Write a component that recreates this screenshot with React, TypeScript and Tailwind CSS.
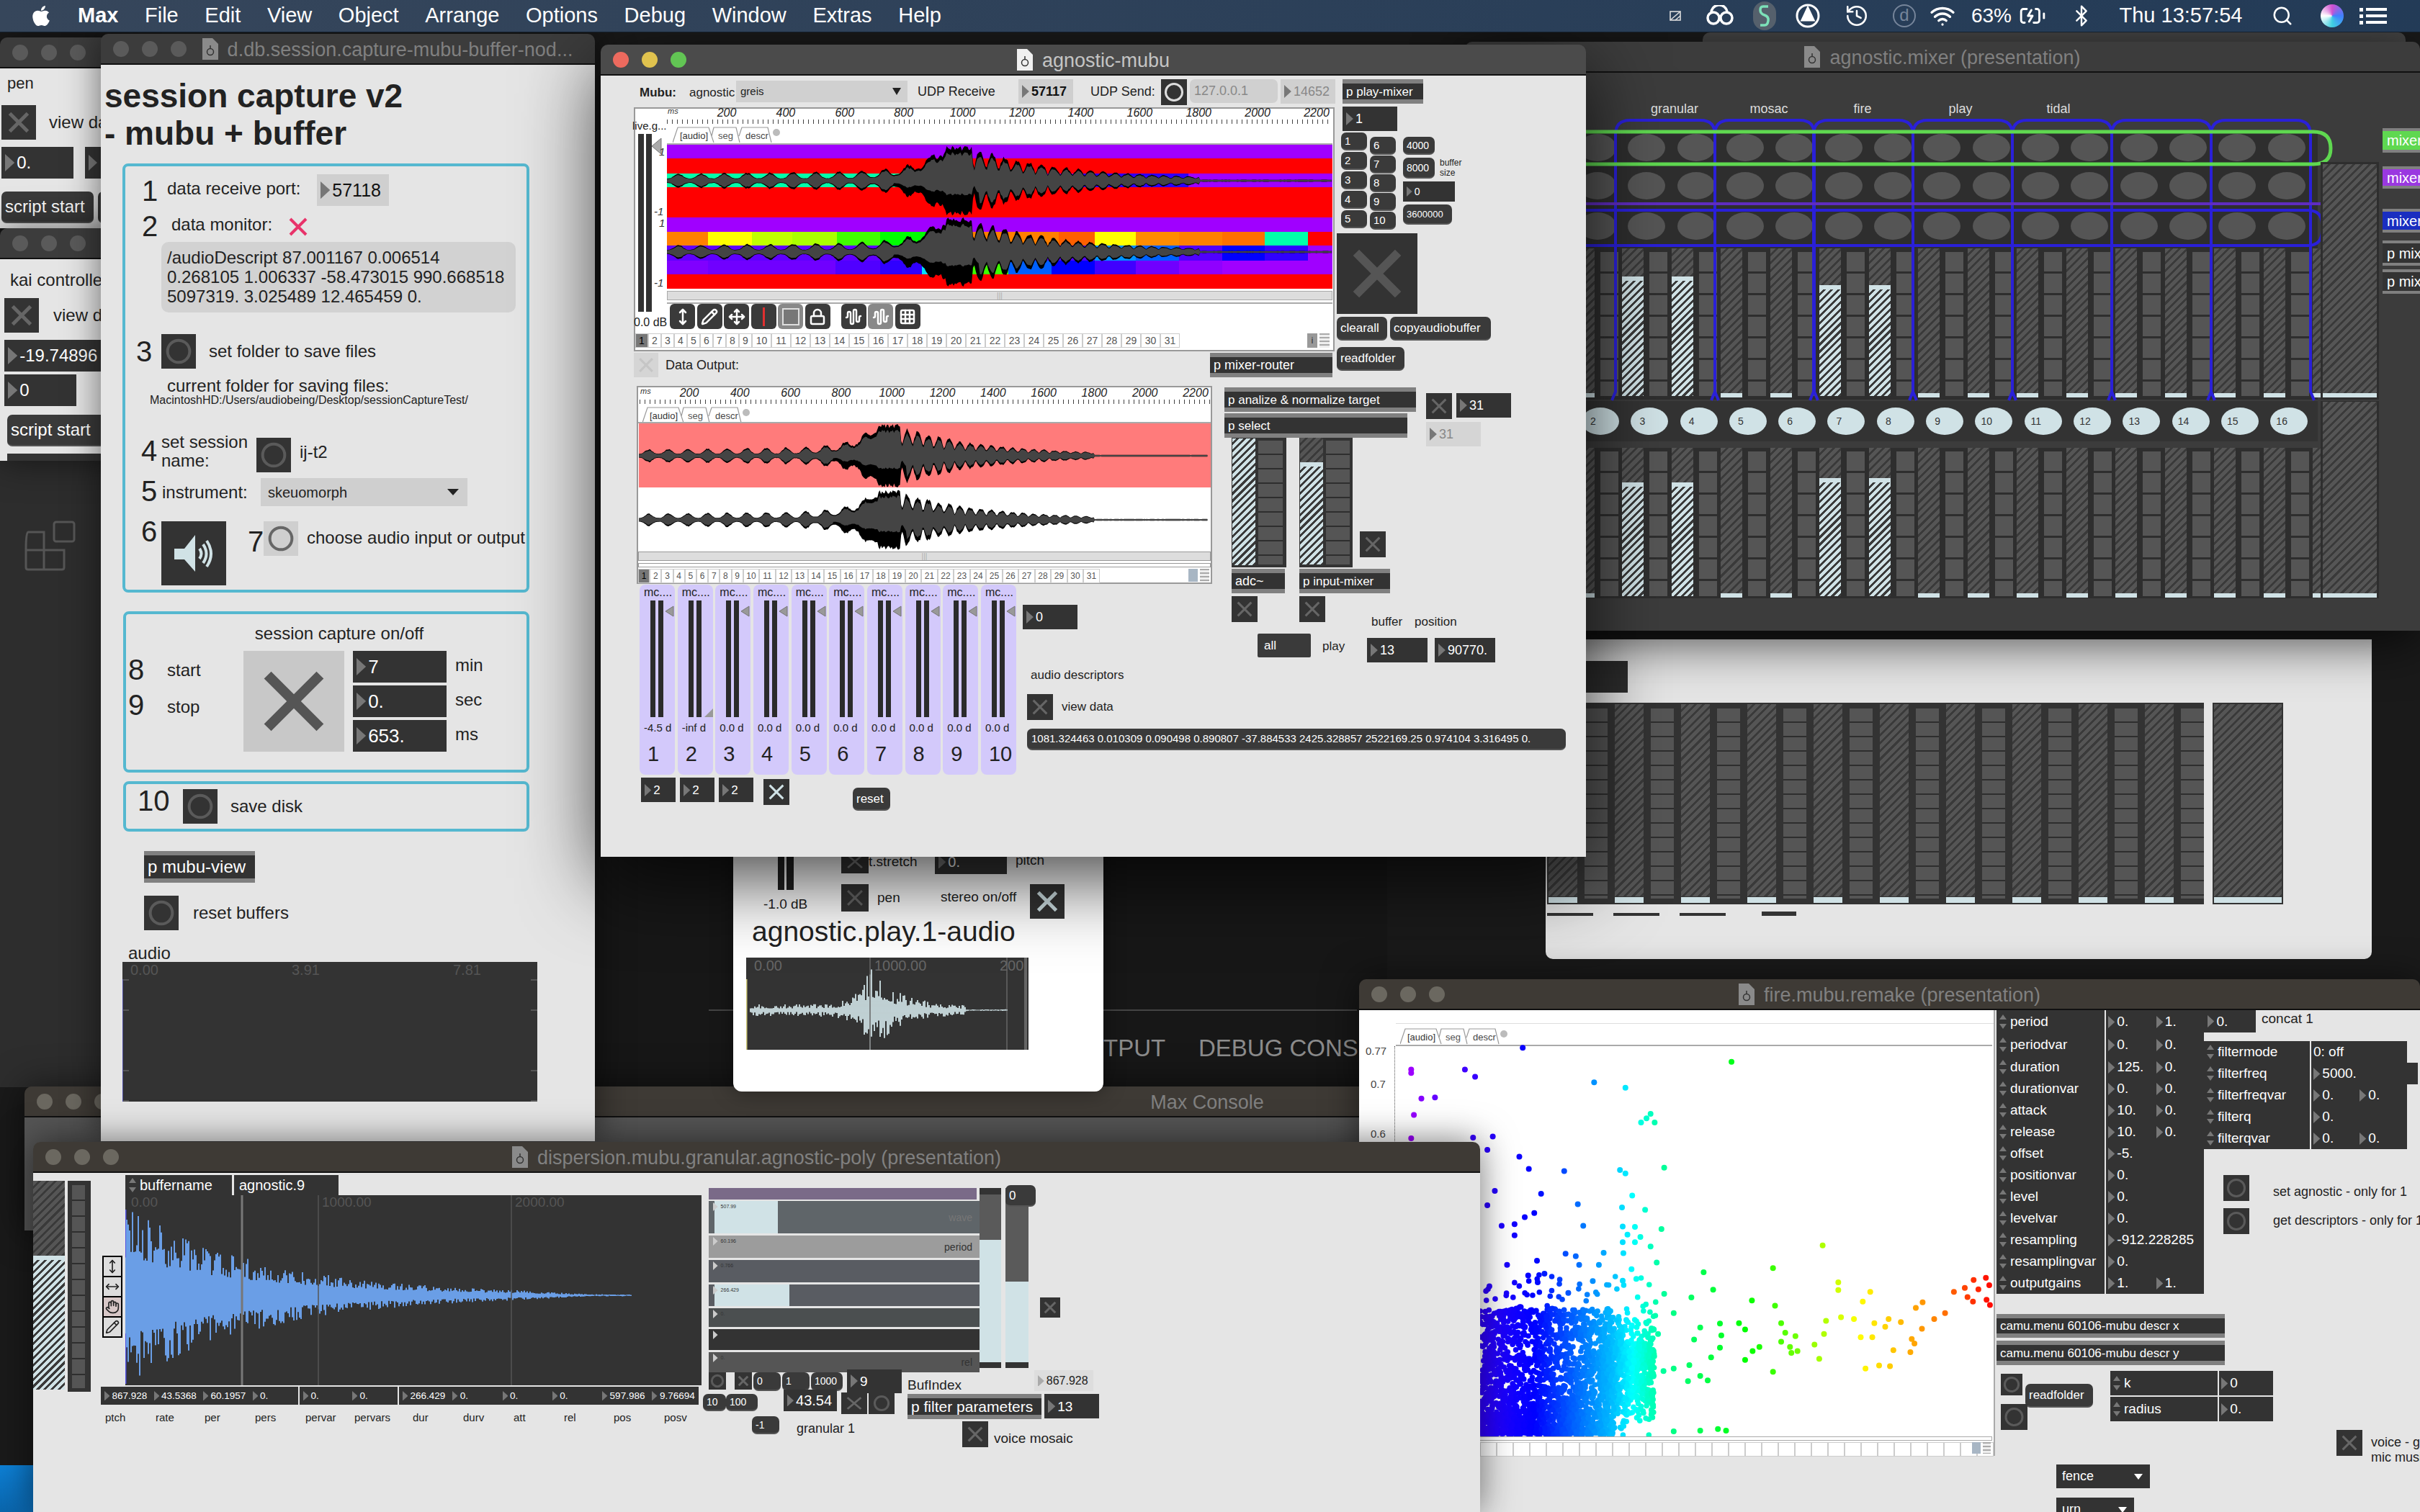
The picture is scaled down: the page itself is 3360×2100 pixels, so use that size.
import React from "react";
import { FaApple } from "react-icons/fa";
import {
  AudioWaveform, BatteryCharging, Bluetooth, Grid3x3, Hand, History, Lock, Move, MoveHorizontal,
  MoveVertical, Pencil, Search, Wifi,
} from "lucide-react";

// Max/MSP desktop: windows are a free canvas, and so is every patcher inside them.
// Coordinates are page pixels; Win shifts its children back so they stay readable.
// Objects that come in rows or stacks (faders, strips, param lists) sit in flex containers.

type BoxProps = { x?: number; y?: number; w?: number; h?: number; className?: string; children?: React.ReactNode };

const hatchLight = "bg-[repeating-linear-gradient(135deg,#d0e2e6_0,#d0e2e6_4px,#3a3a3a_4px,#3a3a3a_7px)]";
const hatchDark = "bg-[repeating-linear-gradient(135deg,#555555_0,#555555_5px,#3a3a3a_5px,#3a3a3a_8px)]";
const meterBig = "bg-[repeating-linear-gradient(to_bottom,#555555_0,#555555_27px,#2e2e2e_27px,#2e2e2e_30px)]";
const meterSmall = "bg-[repeating-linear-gradient(to_bottom,#555555_0,#555555_18px,#2e2e2e_18px,#2e2e2e_20px)]";
const listLines = "bg-[repeating-linear-gradient(to_bottom,#aaaaaa_0,#aaaaaa_2px,#eeeeee_2px,#eeeeee_5px)]";

const Box = ({ x, y, w, h, className = "", children }: BoxProps) => (
  <div className={`${x === undefined ? "relative shrink-0" : "absolute"} ${className}`} style={{ left: x, top: y, width: w, height: h }}>
    {children}
  </div>
);

const T = ({ x, y, s, c = "text-[#222222]", center, children }: { x: number; y: number; s: number; c?: string; center?: boolean; children: React.ReactNode }) => (
  <span
    className={`absolute leading-none whitespace-nowrap ${c} ${center ? "-translate-x-1/2" : ""}`}
    style={{ left: x, top: y - s * 0.5, fontSize: s }}
  >
    {children}
  </span>
);

const Arrow = ({ h, fill = "#777777" }: { h: number; fill?: string }) => (
  <svg width={h * 0.55} height={h} viewBox="0 0 10 18" preserveAspectRatio="none" className="shrink-0">
    <path d="M0 0L10 9L0 18Z" fill={fill} />
  </svg>
);

type NumProps = { x?: number; y?: number; w: number; h: number; v: string; s?: number; bg?: string; c?: string; fill?: string };
const Num = ({ x, y, w, h, v, s = 22, bg = "bg-[#333333]", c = "text-white", fill }: NumProps) => (
  <Box x={x} y={y} w={w} h={h} className={`flex items-center gap-[3px] pl-[5px] ${bg} ${c}`}>
    <Arrow h={Math.min(h * 0.55, s)} fill={fill} />
    <span className="leading-none whitespace-nowrap" style={{ fontSize: s }}>{v}</span>
  </Box>
);

const Tog = ({ x, y, w, h, bg = "bg-[#333333]", stroke = "#5a5a5a", sw = 3 }: { x: number; y: number; w: number; h: number; bg?: string; stroke?: string; sw?: number }) => (
  <Box x={x} y={y} w={w} h={h} className={bg}>
    <svg width="100%" height="100%" viewBox="0 0 100 100" preserveAspectRatio="none">
      <path d="M24 24L76 76M76 24L24 76" stroke={stroke} strokeWidth={sw * (100 / w)} fill="none" />
    </svg>
  </Box>
);

const Ring = ({ x, y, w, h, bg = "bg-[#333333]", stroke = "#5a5a5a" }: { x: number; y: number; w: number; h: number; bg?: string; stroke?: string }) => {
  const r = Math.min(w, h) * 0.32;
  return (
    <Box x={x} y={y} w={w} h={h} className={bg}>
      <svg width={w} height={h}>
        <circle cx={w / 2} cy={h / 2} r={r} stroke={stroke} strokeWidth={Math.max(3, r * 0.26)} fill="none" />
      </svg>
    </Box>
  );
};

const Sub = ({ x, y, w, h, v, s = 19 }: { x: number; y: number; w: number; h: number; v: string; s?: number }) => (
  <Box x={x} y={y} w={w} h={h} className="flex items-center overflow-hidden border-y-[6px] border-[#808080] bg-[#333333] pl-[5px] text-white">
    <span className="leading-none whitespace-nowrap" style={{ fontSize: s }}>{v}</span>
  </Box>
);

const Msg = ({ x, y, w, h, v, s = 17 }: { x?: number; y?: number; w: number; h: number; v: string; s?: number }) => (
  <Box x={x} y={y} w={w} h={h} className="flex items-center overflow-hidden rounded-[7px] border-b-2 border-[#555555] bg-[#3a3a3a] pl-[5px] text-white">
    <span className="leading-none whitespace-nowrap" style={{ fontSize: s }}>{v}</span>
  </Box>
);

const FileIcon = ({ c = "#8a8a8a" }: { c?: string }) => (
  <svg width="22" height="30" viewBox="0 0 22 30" className="shrink-0">
    <path d="M0 0H14L22 8V30H0Z" fill={c} />
    <circle cx="11" cy="19" r="4.5" fill="none" stroke="#333333" strokeWidth="1.5" />
    <path d="M11 14V10" stroke="#333333" strokeWidth="1.5" />
  </svg>
);

type WinProps = { x: number; y: number; w: number; h: number; children?: React.ReactNode; title?: string; bar?: string; body?: string; dots?: string[]; tc?: string; pad?: string; shadow?: string; icon?: string; plain?: boolean };

const Win = ({ x, y, w, h, title, bar = "bg-[#3c3c3c]", body = "bg-[#e5e5e5]", dots = ["#5a5a5a", "#5a5a5a", "#5a5a5a"], tc = "text-[#808080]", pad = "", shadow = "shadow-[0_0_50px_rgba(0,0,0,0.55)]", icon, plain, children }: WinProps) => (
  <div className={`absolute flex flex-col overflow-hidden rounded-t-[10px] ${shadow}`} style={{ left: x, top: y, width: w, height: h }}>
    <div className={`relative flex h-[43px] shrink-0 items-center justify-center gap-[13px] border-b-2 border-[#111111] ${bar} ${pad}`}>
      <div className="absolute left-[17px] top-[10px] flex gap-[18px]">
        {dots.map((d, i) => (
          <div key={i} className="h-[22px] w-[22px] rounded-full" style={{ background: d }} />
        ))}
      </div>
      {title && !plain && <FileIcon c={icon} />}
      {title && <span className={`mt-[3px] text-[27px] leading-none whitespace-nowrap ${tc}`}>{title}</span>}
    </div>
    <div className={`relative flex-1 overflow-hidden ${body}`}>
      <div className="absolute" style={{ left: -x, top: -(y + 43) }}>{children}</div>
    </div>
  </div>
);

const random = (seed: number) => () => {
  seed = (seed * 16807) % 2147483647;
  return seed / 2147483647;
};

// black outer envelope and grey inner envelope of the mubu audio track
const trackWave = (x0: number, x1: number, cy: number, amp: number, seed: number) => {
  const r = random(seed);
  const top: string[] = [];
  const bot: string[] = [];
  const itop: string[] = [];
  const ibot: string[] = [];
  const W = x1 - x0;
  for (let px = 0; px <= W; px += W / 480) {
    const t = px / W;
    let e = 0.03;
    if (t < 0.42) e = 0.07 + (0.14 + 0.25 * t) * Math.pow(Math.abs(Math.sin(Math.PI * t * 29)), 3) + 0.8 * Math.pow(t / 0.42, 10);
    else if (t < 0.46) e = 1;
    else if (t < 0.8) e = 0.03 + 0.95 * Math.exp(-(t - 0.46) * 6.8) * (0.35 + 0.65 * Math.abs(Math.sin(t * 170)));
    const a = amp * Math.min(1, e * (0.85 + 0.15 * r()));
    const core = t > 0.34 && t < 0.47;
    top.push(`${x0 + px},${cy - a}`);
    bot.unshift(`${x0 + px},${cy + a}`);
    itop.push(`${x0 + px},${cy - a * 0.82}`);
    ibot.unshift(`${x0 + px},${cy + a * (core ? 0.42 : 0.78)}`);
  }
  return { outer: [...top, ...bot].join(" "), inner: [...itop, ...ibot].join(" ") };
};

const Wave = ({ x0, x1, cy, amp, seed }: { x0: number; x1: number; cy: number; amp: number; seed: number }) => {
  const { outer, inner } = trackWave(x0, x1, cy, amp, seed);
  return (
    <>
      <polygon points={outer} fill="#000000" />
      <polygon points={inner} fill="#444444" />
    </>
  );
};

const barsPath = (x0: number, x1: number, cy: number, env: (t: number, x: number) => number, seed: number, step = 2, base = 0.45, pow = 1) => {
  const r = random(seed);
  let d = "";
  for (let x = x0; x <= x1; x += step) {
    const e = env((x - x0) / (x1 - x0), x);
    const up = e * (base + (1 - base) * Math.pow(r(), pow));
    const down = e * (base + (1 - base) * Math.pow(r(), pow));
    d += `M${x} ${(cy - up).toFixed(1)}V${(cy + down).toFixed(1)}`;
  }
  return d;
};

const Ruler = ({ x0, step, y, left, w }: { x0: number; step: number; y: number; left: number; w: number }) => (
  <>
    <T x={left + 1} y={y - 3} s={11} c="text-[#333333] italic">ms</T>
    {[200, 400, 600, 800, 1000, 1200, 1400, 1600, 1800, 2000, 2200].map((v, i) => (
      <T key={v} x={x0 + i * step} y={y} s={16} c="text-[#222222] italic" center>{v}</T>
    ))}
    <Box x={left} y={y + 9} w={w} h={6} className="bg-[repeating-linear-gradient(to_right,#444444_0,#444444_1px,transparent_1px,transparent_7px)]" />
  </>
);

const Tabs = ({ x, y }: { x: number; y: number }) => (
  <>
    <svg className="absolute" style={{ left: x - 8, top: y }} width="170" height="24">
      <path d="M0 23L7 2H50L57 23M54 14L57 2H88L93 23M92 14L96 2H132L137 23" stroke="#999999" fill="none" strokeWidth="1.2" />
      <circle cx="144" cy="9" r="5" fill="#bbbbbb" />
    </svg>
    <T x={x + 2} y={y + 13} s={13} c="text-[#333333]">[audio]</T>
    <T x={x + 55} y={y + 13} s={13} c="text-[#555555]">seg</T>
    <T x={x + 93} y={y + 13} s={13} c="text-[#444444]">descr</T>
  </>
);

const TrackNums = ({ x, y, a, b, s, n = true }: { x: number; y: number; a: number; b: number; s: number; n?: boolean }) => (
  <div className="absolute flex" style={{ left: x, top: y }}>
    {Array.from({ length: 31 }, (_, i) => (
      <div
        key={i}
        className={`flex h-[20px] items-center justify-center border border-[#cccccc] leading-none ${n && i === 0 ? "bg-[#777777] text-black" : "bg-white text-[#555555]"}`}
        style={{ width: i < 9 ? a : b, fontSize: s }}
      >
        {n ? i + 1 : ""}
      </div>
    ))}
  </div>
);

// dark hatch above the handle, light hatch below it
const Fader = ({ x, y, w, h, level }: { x?: number; y?: number; w: number; h: number; level: number }) => (
  <Box x={x} y={y} w={w} h={h} className="flex flex-col">
    <div className={`shrink-0 ${hatchDark}`} style={{ height: level }} />
    <div className="h-[6px] shrink-0 bg-[#d0e2e6]" />
    <div className={`min-h-0 flex-1 ${hatchLight}`} />
  </Box>
);

const Desktop = () => (
  <>
    <Box x={0} y={640} w={140} h={870} className="bg-[#2d2d2d]" />
    <svg className="absolute left-[33px] top-[722px]" width="74" height="72" fill="none" stroke="#555555" strokeWidth="3">
      <rect x="42" y="3" width="28" height="27" rx="3" />
      <path d="M3 41Q3 17 6 17H28V42H56V66Q56 69 53 69H6Q3 69 3 66ZM3 42H28V69" />
    </svg>
    <Box x={826} y={1180} w={1100} h={330} className="bg-[#171717]" />
    <Box x={984} y={1402} w={900} h={2} className="bg-[#444444]" />
    <T x={1532} y={1455} s={33} c="text-[#8c8c8c]">TPUT</T>
    <T x={1664} y={1455} s={33} c="text-[#8c8c8c]">DEBUG CONSOLE</T>
    <Box x={0} y={2035} w={46} h={65} className="bg-gradient-to-b from-[#0d80d6] to-[#0a66ad]" />
  </>
);

const LeftWindows = () => (
  <>
    <Win x={0} y={52} w={170} h={265}>
      <T x={10} y={116} s={22}>pen</T>
      <Tog x={2} y={146} w={48} h={48} stroke="#666666" sw={5} />
      <T x={68} y={170} s={24}>view data</T>
      <Num x={2} y={204} w={100} h={44} v="0." s={24} />
      <Num x={118} y={204} w={60} h={44} v="" />
      <Msg x={2} y={266} w={128} h={44} v="script start" s={24} />
      <Msg x={136} y={266} w={60} h={44} v="" />
    </Win>
    <Win x={0} y={317} w={170} h={323}>
      <T x={14} y={389} s={24}>kai controller</T>
      <Tog x={6} y={414} w={48} h={48} stroke="#666666" sw={5} />
      <T x={74} y={438} s={24}>view data</T>
      <Num x={6} y={472} w={170} h={44} v="-19.74896" s={24} />
      <Num x={6} y={520} w={100} h={44} v="0" s={24} />
      <Msg x={10} y={576} w={160} h={44} v="script start" s={24} />
      <Box x={10} y={630} w={160} h={10} className="bg-[#333333]" />
    </Win>
  </>
);

const Panel = ({ x, y, w, h }: { x: number; y: number; w: number; h: number }) => (
  <Box x={x} y={y} w={w} h={h} className="rounded-[8px] border-[4px] border-[#55b8d0]" />
);

const Session = () => (
  <Win x={140} y={47} w={686} h={1538} title="d.db.session.capture-mubu-buffer-nod..." pad="pl-[110px]">
    <T x={145} y={133} s={46} c="font-bold text-[#222222]">session capture v2</T>
    <T x={145} y={185} s={46} c="font-bold text-[#222222]">- mubu + buffer</T>
    <Panel x={170} y={227} w={565} h={596} />
    <T x={197} y={265} s={40}>1</T>
    <T x={232} y={262} s={24}>data receive port:</T>
    <Num x={440} y={242} w={100} h={44} v="57118" s={25} bg="bg-[#cfcfcf]" c="text-[#111111]" />
    <T x={197} y={314} s={40}>2</T>
    <T x={238} y={312} s={24}>data monitor:</T>
    <svg className="absolute left-[401px] top-[302px]" width="26" height="26">
      <path d="M2 2L24 24M24 2L2 24" stroke="#e8336a" strokeWidth="4" />
    </svg>
    <Box x={224} y={336} w={492} h={98} className="rounded-[10px] bg-[#d2d2d2] pl-[8px] pt-[8px] text-[24px] leading-[27px] whitespace-nowrap text-[#222222]">
      /audioDescript 87.001167 0.006514<br />0.268105 1.006337 -58.473015 990.668518<br />5097319. 3.025489 12.465459 0.
    </Box>
    <T x={189} y={488} s={40}>3</T>
    <Ring x={224} y={464} w={48} h={48} />
    <T x={290} y={488} s={24}>set folder to save files</T>
    <T x={232} y={536} s={24}>current folder for saving files:</T>
    <T x={208} y={556} s={16}>MacintoshHD:/Users/audiobeing/Desktop/sessionCaptureTest/</T>
    <T x={196} y={626} s={40}>4</T>
    <T x={224} y={614} s={24}>set session</T>
    <T x={224} y={640} s={24}>name:</T>
    <Ring x={356} y={608} w={48} h={48} />
    <T x={416} y={628} s={24}>ij-t2</T>
    <T x={196} y={682} s={40}>5</T>
    <T x={225} y={684} s={24}>instrument:</T>
    <Box x={362} y={664} w={287} h={39} className="flex items-center justify-between bg-[#cfcfcf] pl-[10px] pr-[12px] text-[20px] text-[#222222]">
      skeuomorph
      <svg width="16" height="9"><path d="M0 0H16L8 9Z" fill="#222222" /></svg>
    </Box>
    <T x={196} y={738} s={40}>6</T>
    <Box x={224} y={724} w={90} h={89} className="bg-[#333333]">
      <svg width="90" height="89" fill="none">
        <path d="M18 38H32L47 19V70L32 53H18Z" fill="#d0e2e6" />
        <path d="M53 38Q58 45 53 52M58 32Q67 45 58 58M63 27Q75 45 63 63" stroke="#d0e2e6" strokeWidth="4" />
      </svg>
    </Box>
    <T x={344} y={752} s={40}>7</T>
    <Ring x={366} y={724} w={48} h={48} bg="bg-[#cfcfcf]" stroke="#666666" />
    <T x={426} y={747} s={24}>choose audio input or output</T>

    <Panel x={171} y={849} w={564} h={224} />
    <T x={471} y={880} s={24} center>session capture on/off</T>
    <T x={178} y={930} s={40}>8</T>
    <T x={232} y={931} s={24}>start</T>
    <T x={178} y={979} s={40}>9</T>
    <T x={232} y={982} s={24}>stop</T>
    <Tog x={338} y={904} w={140} h={140} bg="bg-[#c8c8c8]" stroke="#555555" sw={14} />
    <div className="absolute left-[490px] top-[904px] flex flex-col gap-[4.5px]">
      {[["7", "min"], ["0.", "sec"], ["653.", "ms"]].map(([v, u]) => (
        <div key={u} className="flex items-center gap-[12px] text-[24px] text-[#222222]">
          <Num w={130} h={43.5} v={v} s={26} />
          <span className="-mt-[3px]">{u}</span>
        </div>
      ))}
    </div>

    <Panel x={171} y={1085} w={564} h={70} />
    <T x={191} y={1112} s={40}>10</T>
    <Ring x={254} y={1096} w={48} h={48} />
    <T x={320} y={1120} s={24}>save disk</T>
    <Sub x={200} y={1182} w={154} h={44} v="p mubu-view" s={24} />
    <Ring x={200} y={1244} w={48} h={48} />
    <T x={268} y={1268} s={24}>reset buffers</T>
    <T x={178} y={1324} s={24}>audio</T>
    <Box x={170} y={1336} w={576} h={194} className="bg-[#333333]" />
    {[["0.00", 181], ["3.91", 405], ["7.81", 629]].map(([v, x]) => (
      <T key={v} x={x as number} y={1347} s={20} c="text-[#555555]">{v}</T>
    ))}
    {[1360, 1402, 1486, 1528].map((y) => (
      <React.Fragment key={y}>
        <Box x={170} y={y} w={9} h={2} className="bg-[#555555]" />
        <Box x={737} y={y} w={9} h={2} className="bg-[#555555]" />
      </React.Fragment>
    ))}
    <Box x={170} y={1360} w={1} h={170} className="bg-[#4a4aa0]" />
  </Win>
);

const faderCols = Array.from({ length: 16 }, (_, i) => i - 1);

// one row of the mixer: hatched fader, then segmented meter, repeated
const FaderRow = ({ y, h, level }: { y: number; h: number; level: (i: number) => number }) => (
  <div className="absolute left-[2183.5px] flex gap-[5.5px]" style={{ top: y }}>
    {faderCols.map((i) => (
      <div key={i} className="flex gap-[8px]">
        <Fader w={30} h={h} level={level(i)} />
        <div className={`mt-[5px] w-[25px] ${meterBig}`} style={{ height: h - 5 }} />
      </div>
    ))}
  </div>
);

const Mixer = () => {
  const side: [string, number, number, string][] = [["mixer.", 178, 34, "bg-[#5fd850]"], ["mixer.", 231, 31, "bg-[#9a38e0]"], ["mixer.", 290, 33, "bg-[#1a2ec0]"], ["p mixer", 334, 35, "bg-[#333333]"], ["p mixer", 374, 34, "bg-[#333333]"]];
  return (
    <>
      <Box x={2364} y={45} w={976} h={16} className="rounded-t-[10px] bg-[#444444]" />
      <Win x={2034} y={58} w={1326} h={818} title="agnostic.mixer (presentation)" body="bg-[#3c3c3c]" shadow="shadow-[0_15px_70px_rgba(0,0,0,0.7)]">
        {[["granular", 2325], ["mosac", 2456], ["fire", 2586], ["play", 2722], ["tidal", 2858]].map(([v, x]) => (
          <T key={v} x={x as number} y={151} s={18} c="text-[#dddddd]" center>{v}</T>
        ))}
        <Box x={2034} y={183} w={1184} h={372} className="bg-[#2e2e2e]" />
        {[205, 258, 314].map((y) => (
          <div key={y} className="absolute left-[2192px] flex gap-[16.35px]" style={{ top: y - 19 }}>
            {Array.from({ length: 15 }, (_, i) => <div key={i} className="h-[38px] w-[52px] rounded-[50%] bg-[#555555]" />)}
          </div>
        ))}
        <FaderRow y={345} h={205} level={(i) => (i === 0 || i === 1 ? 39 : i === 4 || i === 5 ? 51 : 201)} />
        <svg className="absolute left-[2034px] top-[160px]" width="1326" height="410" fill="none">
          {[209, 347, 484, 622, 760, 898, 1036].map((a) => (
            <path key={a} d={`M${a - 5} 396L${a} 384V27Q${a} 7 ${a + 20} 7H${a + 118}Q${a + 138} 7 ${a + 138} 27V384L${a + 143} 396`} stroke="#2a20d8" strokeWidth="4" />
          ))}
          <path d="M0 123H1190M1190 123Q1195 123 1197 117" stroke="#5f2cc0" strokeWidth="4" />
          <path d="M0 132H1170Q1190 132 1190 152V160Q1190 181 1170 181H0" stroke="#2a20d8" strokeWidth="4" />
          <path d="M0 23H1178Q1202 23 1202 46Q1202 68 1178 68H0Z" stroke="#5fd850" strokeWidth="5" />
        </svg>
        <div className="absolute left-[2034px] top-[557px] flex h-[56px] w-[1184px] items-center gap-[16.3px] bg-[#333333] pl-[162px]">
          {Array.from({ length: 15 }, (_, i) => (
            <div key={i} className="flex h-[38px] w-[52px] shrink-0 items-center justify-center rounded-[50%] bg-[#d0e2e6] pr-[20px] text-[14px] text-[#333333]">
              {i + 2}
            </div>
          ))}
        </div>
        <Box x={2034} y={622} w={1184} h={209} className="bg-[#2e2e2e]" />
        <FaderRow y={622} h={206} level={(i) => (i === 0 || i === 1 ? 48 : i === 4 || i === 5 ? 42 : 202)} />
        <Box x={3222} y={225} w={81} h={330} className="bg-[#2e2e2e]" />
        <Box x={3222} y={557} w={81} h={274} className="bg-[#2e2e2e]" />
        <Fader x={3225} y={228} w={75} h={324} level={318} />
        <Fader x={3225} y={558} w={75} h={270} level={266} />
        {side.map(([v, y, h, bg]) => (
          <Box key={y} x={3308} y={y} w={52} h={h} className={`flex items-center overflow-hidden border-y-[4px] border-[#808080] pl-[6px] text-[20px] whitespace-nowrap text-white ${bg}`}>{v}</Box>
        ))}
      </Win>
    </>
  );
};

const BehindMixer = () => (
  <Box x={2146} y={888} w={1147} h={444} className="overflow-hidden rounded-b-[10px] bg-[#e5e5e5]">
    <div className="absolute left-[-2146px] top-[-888px]">
      <Box x={2200} y={918} w={60} h={44} className="bg-[#2e2e2e]" />
      <div className="absolute left-[2148px] top-[976px] flex h-[280px] w-[912px] gap-[10px] overflow-hidden bg-[#333333] pl-[2px]">
        {Array.from({ length: 11 }, (_, i) => (
          <div key={i} className="flex shrink-0 gap-[10px]">
            <div className="flex w-[40px] flex-col pt-[2px]">
              <div className={`h-[267px] ${hatchDark}`} />
              <div className="mt-[1px] h-[8px] bg-[#d0e2e6]" />
            </div>
            <div className={`mt-[8px] h-[264px] w-[32px] ${meterSmall}`} />
          </div>
        ))}
      </div>
      <Box x={3072} y={976} w={98} h={280} className="bg-[#333333] p-[2px]">
        <div className={`h-[267px] ${hatchDark}`} />
        <div className="mt-[1px] h-[8px] bg-[#d0e2e6]" />
      </Box>
      <div className="absolute left-[2148px] top-[1266px] flex items-end gap-[28px]">
        <div className="h-[4px] w-[64px] bg-[#333333]" />
        <div className="h-[4px] w-[64px] bg-[#333333]" />
        <div className="h-[4px] w-[64px] bg-[#333333]" />
        <div className="ml-[22px] h-[6px] w-[48px] bg-[#333333]" />
      </div>
    </div>
  </Box>
);

const PlayWindow = () => (
  <Box x={1018} y={1100} w={514} h={416} className="overflow-hidden rounded-b-[12px] bg-white shadow-[0_0_30px_rgba(0,0,0,0.4)]">
    <div className="absolute left-[-1018px] top-[-1100px]">
      <Box x={1080} y={1180} w={9} h={56} className="bg-[#222222]" />
      <Box x={1092} y={1180} w={10} h={56} className="bg-[#222222]" />
      <T x={1060} y={1255} s={19}>-1.0 dB</T>
      <Tog x={1168} y={1180} w={38} h={33} stroke="#777777" />
      <T x={1206} y={1196} s={19}>t.stretch</T>
      <Num x={1298} y={1180} w={100} h={34} v="0." s={20} />
      <T x={1410} y={1194} s={19}>pitch</T>
      <Tog x={1168} y={1228} w={38} h={38} stroke="#666666" />
      <T x={1218} y={1246} s={19}>pen</T>
      <T x={1306} y={1245} s={19}>stereo on/off</T>
      <Tog x={1430} y={1228} w={48} h={48} stroke="#d0e2e6" sw={5} />
      <T x={1044} y={1293} s={39}>agnostic.play.1-audio</T>
      <Box x={1036} y={1330} w={392} h={128} className="bg-[#333333]" />
      {[["0.00", 1047], ["1000.00", 1214], ["200", 1388]].map(([v, x]) => (
        <T key={v} x={x as number} y={1341} s={20} c="text-[#666666]">{v}</T>
      ))}
      <svg className="absolute left-[1036px] top-[1330px]" width="392" height="128" fill="none">
        <path d="M0 30V128" stroke="#cfc878" strokeWidth="3" />
        <path d="M362 0V128" stroke="#666666" strokeWidth="1.5" />
        <path d="M388 0V128" stroke="#666666" strokeWidth="4" />
        <path
          d={barsPath(6, 362, 73, (t) => {
            const p = t - 0.47;
            if (t > 0.84) return 1.2;
            return p < 0 ? 8 + 55 * Math.exp(p * 20) : 5 + 55 * Math.exp(-p * 9);
          }, 77, 2, 0.3, 1.5)}
          stroke="#d0e2e6"
          strokeWidth="1.8"
        />
        <path d="M172 0V128" stroke="#666666" strokeWidth="1.5" />
      </svg>
    </div>
  </Box>
);

const toolIcons = [MoveVertical, Pencil, Move, null, null, Lock, AudioWaveform, AudioWaveform, Grid3x3];
const stripDb = ["-4.5 d", "-inf d", "0.0 d", "0.0 d", "0.0 d", "0.0 d", "0.0 d", "0.0 d", "0.0 d", "0.0 d"];
const tiles1: [number, number, string][] = [[926, 983, "#ff8000"], [983, 1044, "#ffff00"], [1044, 1100, "#c0ff00"], [1100, 1162, "#aaff00"], [1162, 1222, "#40ff00"], [1222, 1305, "#00ff00"], [1305, 1470, "#ff8000"], [1470, 1520, "#ff6000"], [1520, 1577, "#ffff00"], [1577, 1637, "#ff8c00"], [1637, 1697, "#ff8000"], [1697, 1756, "#ff7000"], [1756, 1816, "#00ffaa"]];
const tiles2: [number, number, string][] = [[926, 1222, "#6000ff"], [1222, 1520, "#5000ff"], [1520, 1577, "#0090ff"], [1577, 1637, "#0060ff"], [1637, 1697, "#5000ff"], [1697, 1756, "#0000ff"], [1756, 1816, "#3000ff"]];
const tiles3: [number, number, string][] = [[926, 983, "#8000ff"], [983, 1160, "#7000ff"], [1160, 1222, "#5000ff"], [1222, 1280, "#3000ff"], [1280, 1296, "#00e0ff"], [1296, 1345, "#2000ff"], [1345, 1400, "#40ff00"], [1400, 1460, "#0060ff"], [1460, 1520, "#0000ff"], [1520, 1577, "#4000ff"], [1577, 1637, "#7000ff"], [1637, 1697, "#9000ff"]];

const Strip = ({ i }: { i: number }) => (
  <div className="relative flex h-[264px] w-[49px] flex-col rounded-[8px] bg-[#d3c9fb] pl-[6px] text-[#222222]">
    <div className="flex h-[22px] items-center text-[16px] leading-none whitespace-nowrap">mc....</div>
    <div className="flex h-[162px] gap-[4px] pl-[9px]">
      <div className="w-[7px] bg-[#2b2b2b]" />
      <div className="w-[7px] bg-[#2b2b2b]" />
    </div>
    <svg className="absolute left-[35px]" style={{ top: i === 1 ? 168 : 28 }} width="14" height="18">
      {i === 1 ? <path d="M14 4V16H2Z" fill="#999999" /> : <path d="M12 2V16L1 9Z" fill="#999999" stroke="#777777" />}
    </svg>
    <div className="mt-[7px] text-[15px] leading-none whitespace-nowrap">{stripDb[i]}</div>
    <div className="mt-[15px] pl-[5px] text-[29px] leading-none">{i + 1}</div>
  </div>
);

const Mubu = () => (
  <Win
    x={834} y={62} w={1368} h={1128} title="agnostic-mubu" bar="bg-[#4b4b4b]" tc="text-[#c4c4c4]" icon="#f0f0f0"
    dots={["#ec6a5e", "#e0c24e", "#62c554"]}
    shadow="shadow-[0_30px_110px_rgba(0,0,0,0.75)]"
  >
    <T x={888} y={128} s={17} c="font-bold text-[#222222]">Mubu:</T>
    <T x={957} y={128} s={17}>agnostic</T>
    <Box x={1022} y={112} w={238} h={30} className="flex items-center justify-between bg-[#d0d0d0] pl-[6px] pr-[9px] text-[15px] text-[#222222]">
      greis
      <svg width="12" height="10"><path d="M0 0H12L6 10Z" fill="#222222" /></svg>
    </Box>
    <T x={1274} y={127} s={18}>UDP Receive</T>
    <Num x={1414} y={110} w={76} h={34} v="57117" s={18} bg="bg-[#cfcfcf]" c="text-[#111111] font-bold" />
    <T x={1514} y={127} s={18}>UDP Send:</T>
    <Ring x={1612} y={110} w={36} h={36} stroke="#dddddd" />
    <Box x={1652} y={110} w={122} h={33} className="flex items-center rounded-[7px] bg-[#d0d0d0] pl-[6px] text-[18px] text-[#888888]">127.0.0.1</Box>
    <Num x={1778} y={110} w={76} h={34} v="14652" s={18} bg="bg-[#d0d0d0]" c="text-[#888888]" />
    <Sub x={1864} y={110} w={112} h={34} v="p play-mixer" s={17} />

    <Box x={880} y={149} w={973} h={339} className="border-2 border-[#999999] bg-white" />
    <Ruler x0={1009} step={81.9} y={157} left={926} w={924} />
    <T x={878} y={174} s={15}>live.g...</T>
    <Tabs x={942} y={175} />
    <Box x={926} y={199} w={924} h={2} className="bg-[#aaaaaa]" />
    <Box x={886} y={186} w={8} h={247} className="bg-[#333333]" />
    <Box x={897} y={186} w={8} h={247} className="bg-[#333333]" />
    <svg className="absolute left-[905px] top-[192px]" width="14" height="22"><path d="M13 0V22L0 11Z" fill="#aaaaaa" stroke="#777777" /></svg>
    {[["1", 210], ["-1", 293], ["1", 309], ["-1", 392]].map(([v, y]) => (
      <T key={`${v}${y}`} x={v === "1" ? 915 : 908} y={y as number} s={15} c="italic text-[#333333]">{v}</T>
    ))}
    <T x={880} y={448} s={16}>0.0 dB</T>
    <svg className="absolute left-[926px] top-[201px]" width="924" height="200">
      <g transform="translate(-926 -201)">
        <rect x="926" y="201" width="924" height="200" fill="#ff0000" />
        <rect x="926" y="201" width="924" height="19" fill="#a000ff" />
        <rect x="926" y="241" width="924" height="19" fill="#a000ff" />
        <rect x="926" y="241" width="400" height="19" fill="#00ffaa" />
        <rect x="1500" y="241" width="150" height="19" fill="#3000ff" />
        <rect x="926" y="302" width="924" height="20" fill="#a000ff" />
        <rect x="926" y="341" width="924" height="40" fill="#a000ff" />
        {tiles1.map(([a, b, c]) => <rect key={a} x={a} y="322" width={b - a} height="19" fill={c} />)}
        {tiles2.map(([a, b, c]) => <rect key={a} x={a} y="341" width={b - a} height="21" fill={c} />)}
        {tiles3.map(([a, b, c]) => <rect key={a} x={a} y="362" width={b - a} height="19" fill={c} />)}
        <Wave x0={926} x1={1849} cy={251} amp={49} seed={11} />
        <Wave x0={926} x1={1849} cy={350} amp={48} seed={23} />
      </g>
    </svg>
    <Box x={926} y={404} w={924} h={13} className="flex items-center justify-center border border-[#aaaaaa] bg-[#dddddd] text-[10px] text-[#aaaaaa]">|||</Box>
    <Box x={926} y={420} w={924} h={2} className="bg-[#aaaaaa]" />
    <div className="absolute left-[930px] top-[422px] flex gap-[2.5px]">
      {toolIcons.map((I, i) => (
        <div key={i} className={`flex h-[35px] w-[35px] items-center justify-center rounded-[6px] ${i === 4 || i === 7 ? "bg-[#888888]" : "bg-[#3a3a3a]"} ${i === 6 ? "ml-[12.5px]" : ""}`}>
          {I ? <I size={24} color="#ffffff" strokeWidth={2.5} /> : i === 3 ? <div className="h-[26px] w-[3px] bg-[#e03030]" /> : <div className="h-[24px] w-[24px] border-2 border-[#dddddd] bg-[#777777]" />}
        </div>
      ))}
    </div>
    <TrackNums x={882} y={463} a={18} b={27} s={14} />
    <Box x={1815} y={463} w={14} h={20} className="flex items-center justify-center bg-[#999999] text-[13px] text-[#333333]">i</Box>
    <Box x={1832} y={463} w={14} h={20} className={listLines} />
    <Tog x={880} y={490} w={34} h={34} bg="bg-[#d5d5d5]" stroke="#c5c5c5" />
    <T x={924} y={507} s={18}>Data Output:</T>
    <Sub x={1680} y={490} w={170} h={34} v="p mixer-router" s={18} />

    <Num x={1864} y={148} w={76} h={34} v="1" s={18} />
    <div className="absolute left-[1862px] top-[184px] flex flex-col gap-[2px]">
      {["1", "2", "3", "4", "5"].map((v) => <Msg key={v} w={36} h={25} v={v} s={15} />)}
    </div>
    <div className="absolute left-[1902px] top-[190px] flex flex-col gap-[1px]">
      {["6", "7", "8", "9", "10"].map((v) => <Msg key={v} w={36} h={25} v={v} s={15} />)}
    </div>
    <div className="absolute left-[1948px] top-[190px] flex flex-col gap-[4px]">
      <Msg w={44} h={25} v="4000" s={14} />
      <Msg w={44} h={29} v="8000" s={14} />
      <Num w={72} h={28} v="0" s={14} />
      <Msg w={68} h={28} v="3600000" s={13} />
    </div>
    <T x={1999} y={226} s={12}>buffer</T>
    <T x={1999} y={240} s={12}>size</T>
    <Tog x={1856} y={324} w={112} h={112} stroke="#555555" sw={12} />
    <div className="absolute left-[1856px] top-[440px] flex gap-[4px]">
      <Msg w={70} h={33} v="clearall" s={17} />
      <Msg w={140} h={33} v="copyaudiobuffer" s={17} />
    </div>
    <Msg x={1856} y={482} w={94} h={33} v="readfolder" s={17} />

    <Box x={884} y={536} w={799} h={275} className="border-2 border-[#999999] bg-white" />
    <Ruler x0={957} step={70.3} y={546} left={888} w={792} />
    <Tabs x={900} y={564} />
    <Box x={886} y={586} w={795} h={2} className="bg-[#aaaaaa]" />
    <svg className="absolute left-[887px] top-[588px]" width="794" height="177">
      <g transform="translate(-887 -588)">
        <rect x="887" y="588" width="794" height="89" fill="#ff7b7b" />
        <Wave x0={887} x1={1678} cy={633} amp={44} seed={31} />
        <Wave x0={887} x1={1678} cy={722} amp={42} seed={47} />
      </g>
    </svg>
    <Box x={886} y={766} w={795} h={13} className="flex items-center justify-center border border-[#999999] bg-[#dddddd] text-[10px] text-[#aaaaaa]">|||</Box>
    <Box x={886} y={782} w={795} h={6} className="border border-[#999999] bg-white" />
    <TrackNums x={886} y={790} a={16.2} b={22.5} s={12} />
    <Box x={1650} y={790} w={13} h={18} className="bg-[#a8b6c4]" />
    <Box x={1666} y={790} w={13} h={18} className={listLines} />
    <Sub x={1700} y={538} w={266} h={34} v="p analize & normalize target" s={17} />
    <Sub x={1700} y={574} w={254} h={34} v="p select" s={17} />
    <Tog x={1980} y={546} w={36} h={36} stroke="#666666" />
    <Num x={2022} y={546} w={76} h={34} v="31" s={18} />
    <Num x={1980} y={586} w={76} h={34} v="31" s={18} bg="bg-[#d5d5d5]" c="text-[#888888]" />
    <Box x={1710} y={608} w={76} h={180} className="flex gap-[4px] bg-[#333333] pl-[1px] pt-[1px]">
      <div className={`h-[176px] w-[32px] ${hatchLight}`} />
      <div className={`mt-[3px] h-[172px] w-[34px] ${meterSmall}`} />
    </Box>
    <Box x={1804} y={608} w={74} h={180} className="flex gap-[4px] bg-[#333333] pl-[1px]">
      <Fader w={32} h={176} level={34} />
      <div className={`mt-[4px] h-[172px] w-[33px] ${meterSmall}`} />
    </Box>
    <Tog x={1888} y={738} w={36} h={36} stroke="#666666" />
    <Sub x={1710} y={790} w={74} h={34} v="adc~" s={18} />
    <Sub x={1804} y={790} w={126} h={34} v="p input-mixer" s={17} />
    <Tog x={1710} y={828} w={36} h={36} stroke="#666666" />
    <Tog x={1804} y={828} w={36} h={36} stroke="#666666" />
    <T x={1904} y={863} s={17}>buffer</T>
    <T x={1964} y={863} s={17}>position</T>
    <Box x={1746} y={880} w={74} h={33} className="flex items-center rounded-[2px] bg-[#3a3a3a] pl-[9px] text-[17px] text-white">all</Box>
    <T x={1836} y={897} s={17}>play</T>
    <div className="absolute left-[1898px] top-[886px] flex gap-[10px]">
      <Num w={84} h={34} v="13" s={18} />
      <Num w={84} h={34} v="90770." s={18} />
    </div>

    <div className="absolute left-[888px] top-[812px] flex gap-[3.67px]">
      {stripDb.map((_, i) => <Strip key={i} i={i} />)}
    </div>
    <Num x={1420} y={840} w={76} h={34} v="0" s={18} />
    <T x={1431} y={937} s={17}>audio descriptors</T>
    <Tog x={1426} y={964} w={36} h={36} stroke="#666666" />
    <T x={1474} y={981} s={17}>view data</T>
    <Box x={1426} y={1012} w={748} h={30} className="flex items-center rounded-[7px] border-b-2 border-[#555555] bg-[#3a3a3a] pl-[6px] text-[15px] whitespace-nowrap text-white">
      1081.324463 0.010309 0.090498 0.890807 -37.884533 2425.328857 2522169.25 0.974104 3.316495 0.
    </Box>
    <div className="absolute left-[890px] top-[1080px] flex gap-[6px]">
      {[0, 1, 2].map((k) => <Num key={k} w={48} h={34} v="2" s={17} />)}
    </div>
    <Tog x={1060} y={1082} w={36} h={36} stroke="#d0e2e6" />
    <Msg x={1184} y={1094} w={52} h={32} v="reset" s={17} />
  </Win>
);

const scatterHue = (x: number) => {
  const stops = [[1940, 285], [2000, 260], [2130, 240], [2190, 215], [2240, 195], [2275, 175], [2300, 160], [2340, 145], [2440, 115], [2580, 60], [2690, 30], [2770, 0]];
  for (let i = 1; i < stops.length; i++) {
    if (x <= stops[i][0]) {
      const [a, h0] = stops[i - 1];
      const [b, h1] = stops[i];
      return h0 + ((h1 - h0) * (x - a)) / (b - a);
    }
  }
  return 0;
};

const sparse = [[248,238],[555,278],[84,300],[84,310],[163,300],[178,321],[353,337],[399,352],[99,383],[119,380],[88,430],[436,427],[430,440],[442,452],[422,452],[84,497],[175,495],[204,492],[196,530],[243,550],[257,585],[309,591],[391,588],[399,598],[456,581],[409,661],[275,656],[207,648],[196,689],[329,686],[394,695],[428,702],[265,711],[251,723],[217,748],[236,743],[236,775],[337,748],[395,750],[413,751],[452,757],[402,773],[421,780],[395,795],[413,795],[436,807],[689,804],[311,828],[396,826],[367,825],[326,835],[269,848],[225,860],[331,860],[445,853],[360,860],[514,881],[616,869],[408,872],[256,890],[280,885],[395,905],[712,910],[712,932],[415,900],[351,906],[270,910],[199,921],[315,940],[528,931],[456,943],[496,953],[759,937],[585,962],[748,965],[619,977],[882,937],[911,903],[929,897],[934,918],[898,926],[918,930],[902,952],[910,965],[930,960],[935,975],[836,967],[826,983],[869,998],[853,1015],[470,998],[694,1020],[716,1010],[735,1015],[765,1027],[786,1015],[781,1037],[804,1024],[835,1043],[538,1028],[566,1027],[628,1027],[509,1039],[575,1045],[634,1054],[649,1064],[540,1062],[691,1058],[745,1067],[762,1067],[820,1072],[824,1085],[447,1058],[500,1074],[628,1080],[677,1088],[596,1095],[586,1107],[641,1095],[652,1107],[643,1112],[793,1104],[818,1110],[538,1097],[525,1125],[575,1132],[684,1129],[752,1157],[772,1148],[788,1150],[616,1166],[493,1147],[470,1157],[455,1164],[509,1178],[520,1191],[491,1193],[470,1337],[509,1335],[535,1330],[547,1335]]
  .map(([a, b]) => [1880 + a / 1.059, 1340 + b / 2.063]);

// dense cloud at the low end of the plot: a blue mass, and a teal lobe floating above the baseline
const dense = (() => {
  const r = random(4242);
  const out: number[][] = [];
  for (let i = 0; i < 2000; i++) {
    const x = 2055 + Math.pow(r(), 0.95) * 185;
    out.push([x, 1992 - Math.pow(r(), 1.6) * 175]);
  }
  for (let i = 0; i < 700; i++) {
    const x = 2225 + r() * 72;
    out.push([x, 1902 + (r() + r() + r() - 1.5) * 66]);
  }
  for (let i = 0; i < 60; i++) out.push([2060 + r() * 240, 1770 + r() * 60]);
  return out;
})();

const paramsA: [string, string[], number][] = [
  ["period", ["0.", "1."], 32], ["periodvar", ["0.", "0."], 32], ["duration", ["125.", "0."], 30], ["durationvar", ["0.", "0."], 30],
  ["attack", ["10.", "0."], 30], ["release", ["10.", "0."], 30], ["offset", ["-5."], 30], ["positionvar", ["0."], 30], ["level", ["0."], 30],
  ["levelvar", ["0."], 30], ["resampling", ["-912.228285"], 30], ["resamplingvar", ["0."], 30], ["outputgains", ["1.", "1."], 30],
];
const paramsB: [string, string[]][] = [["filtermode", ["0: off"]], ["filterfreq", ["5000."]], ["filterfreqvar", ["0.", "0."]], ["filterq", ["0."]], ["filterqvar", ["0.", "0."]]];

const Updown = () => (
  <svg width="12" height="24" className="shrink-0"><path d="M6 2L11 9H1ZM6 22L11 15H1Z" fill="#777777" /></svg>
);

const ParamRow = ({ w1, w2, h, name, vals, step = 69, s = 19 }: { w1: number; w2: number; h: number; name: string; vals: string[]; step?: number; s?: number }) => (
  <div className="flex gap-[2px]" style={{ height: h }}>
    <div className="flex items-center gap-[4px] bg-[#333333] pl-[3px] text-white" style={{ width: w1, fontSize: s }}>
      <Updown />{name}
    </div>
    <div className="flex items-center bg-[#333333] pl-[3px] text-white" style={{ width: w2, fontSize: s }}>
      {vals.map((v, i) => (
        <span key={i} className="flex items-center gap-[3px] whitespace-nowrap" style={{ width: step }}>
          {!v.startsWith("0:") && <Arrow h={17} />}{v}
        </span>
      ))}
    </div>
  </div>
);

const Fire = () => (
  <Win x={1887} y={1360} w={1473} h={740} title="fire.mubu.remake (presentation)" bar="bg-[#3e3a35]" dots={["#6b6860", "#6b6860", "#6b6860"]}>
    <Box x={1887} y={1403} w={883} h={619} className="border-b-2 border-r-2 border-[#aaaaaa] bg-white" />
    <Box x={1938} y={1421} w={830} h={1} className="bg-[#dddddd]" />
    <Tabs x={1952} y={1427} />
    <Box x={1938} y={1451} w={828} h={2} className="bg-[#aaaaaa]" />
    <Box x={1936} y={1453} w={1} h={180} className="border-l border-dotted border-[#555555]" />
    {[["0.77", 1459], ["0.7", 1505], ["0.6", 1574]].map(([v, y]) => (
      <T key={v} x={v === "0.77" ? 1896 : 1903} y={y as number} s={15} c="text-[#444444]">{v}</T>
    ))}
    <svg className="absolute left-[1887px] top-[1403px]" width="883" height="600">
      <g transform="translate(-1887 -1403)">
        {dense.map(([x, y], i) => <circle key={i} cx={x} cy={y} r="3.8" fill={`hsl(${scatterHue(x)},100%,50%)`} />)}
        {sparse.map(([x, y], i) => <circle key={i} cx={x} cy={y} r="4" fill={`hsl(${scatterHue(x)},100%,50%)`} />)}
      </g>
    </svg>
    <Box x={1938} y={1995} w={828} h={6} className="border border-[#aaaaaa] bg-white" />
    <TrackNums x={2055} y={2003} a={23} b={23} s={12} n={false} />
    <Box x={2738} y={2003} w={12} h={16} className="bg-[#a8b6c4]" />
    <Box x={2753} y={2003} w={11} h={16} className={listLines} />
    <div className="absolute left-[2772px] top-[1403px] flex flex-col">
      {paramsA.map(([n, v, h]) => <ParamRow key={n} w1={150} w2={136} h={h} name={n} vals={v} />)}
    </div>
    <Num x={3060} y={1403} w={72} h={31} v="0." s={19} />
    <T x={3140} y={1414} s={19}>concat 1</T>
    <div className="absolute left-[3060px] top-[1446px] flex flex-col">
      {paramsB.map(([n, v]) => <ParamRow key={n} w1={147} w2={n === "filterfreq" ? 148 : 133} h={30} name={n} vals={v} step={64} />)}
    </div>
    <Ring x={3087} y={1632} w={36} h={36} />
    <T x={3156} y={1655} s={18}>set agnostic - only for 1</T>
    <Ring x={3087} y={1678} w={36} h={36} />
    <T x={3156} y={1695} s={18}>get descriptors - only for 1</T>
    <Sub x={2772} y={1825} w={317} h={33} v="camu.menu 60106-mubu descr x" s={17} />
    <Sub x={2772} y={1862} w={317} h={34} v="camu.menu 60106-mubu descr y" s={17} />
    <Ring x={2778} y={1908} w={30} h={30} />
    <Msg x={2812} y={1922} w={94} h={33} v="readfolder" s={17} />
    <Ring x={2778} y={1950} w={37} h={36} />
    <div className="absolute left-[2930px] top-[1904px] flex flex-col gap-[2px]">
      <ParamRow w1={149} w2={75} h={34} name="k" vals={["0"]} />
      <ParamRow w1={149} w2={75} h={34} name="radius" vals={["0."]} />
    </div>
    <Tog x={3244} y={1986} w={36} h={36} stroke="#666666" />
    <T x={3292} y={2003} s={18}>voice - granular</T>
    <T x={3292} y={2024} s={18}>mic music</T>
    <div className="absolute left-[2855px] top-[2034px] flex flex-col gap-[13px] text-[18px] text-white">
      {[["fence", "w-[130px]"], ["urn", "w-[108px]"]].map(([v, w]) => (
        <div key={v} className={`flex h-[33px] items-center justify-between bg-[#333333] pl-[8px] pr-[10px] ${w}`}>
          {v}
          <svg width="12" height="8"><path d="M0 0H12L6 8Z" fill="#ffffff" /></svg>
        </div>
      ))}
    </div>
  </Win>
);

const Dispersion = () => {
  const d = barsPath(174, 876, 1799, (t, x) => {
    const k = x - 174;
    return Math.max(1.5, 125 * Math.exp(-k / 190) * (k > 560 ? Math.max(0.12, 1 - (k - 560) / 140) : 1));
  }, 99, 2, 0.42, 1.4);
  const groups: [number, number, [string][]][] = [
    [274, 68.5, [["867.928"], ["43.5368"], ["60.1957"], ["0."]]],
    [136, 68, [["0."], ["0."]]],
    [416, 69.3, [["266.429"], ["0."], ["0."], ["0."], ["597.986"], ["9.76694"]]],
  ];
  const labels: [string, number][] = [["ptch", 70], ["rate", 68], ["per", 70], ["pers", 70], ["pervar", 68], ["pervars", 81], ["dur", 70], ["durv", 70], ["att", 70], ["rel", 69], ["pos", 70], ["posv", 40]];
  const rows = [
    [45, "bg-[#5f6569]", 88, "507.99", "wave", "text-[#777777]"],
    [31, "bg-[#9c9c9c]", 0, "60.196", "period", "text-[#333333]"],
    [31, "bg-[#595c62]", 0, "0.766", "", ""],
    [30, "bg-[#595c62]", 104, "266.429", "", ""],
    [26, "bg-[#4b4f50]", 0, "0.", "", ""],
    [29, "bg-[#333333]", 0, "0.", "", ""],
    [28, "bg-[#555555]", 0, "0.", "rel", "text-[#333333]"],
  ] as [number, string, number, string, string, string][];
  return (
    <Win x={46} y={1586} w={2009} h={514} title="dispersion.mubu.granular.agnostic-poly (presentation)" bar="bg-[#3e3a35]" dots={["#6b6860", "#6b6860", "#6b6860"]}>
      <Fader x={46} y={1640} w={44} h={290} level={104} />
      <Box x={94} y={1640} w={32} h={293} className="bg-[#333333]" />
      <Box x={100} y={1646} w={18} h={282} className="bg-[repeating-linear-gradient(to_bottom,#555555_0,#555555_20px,#2e2e2e_20px,#2e2e2e_22px)]" />
      <Box x={142} y={1744} w={28} h={114} className="flex flex-col gap-[2px] border-2 border-black bg-black">
        {[MoveVertical, MoveHorizontal, Hand, Pencil].map((I, i) => (
          <div key={i} className={`flex h-[26px] items-center justify-center ${i === 2 ? "bg-[#d8c8c8]" : "bg-[#dddddd]"}`}>
            <I size={20} color="#222222" />
          </div>
        ))}
      </Box>
      <div className="absolute left-[174px] top-[1632px] flex h-[28px] gap-[3px] text-[20px] text-white">
        <div className="flex w-[148px] items-center gap-[4px] bg-[#333333] pl-[4px]"><Updown />buffername</div>
        <div className="flex w-[145px] items-center bg-[#333333] pl-[7px]">agnostic.9</div>
      </div>
      <Box x={174} y={1660} w={800} h={264} className="bg-[#333333]" />
      {[["0.00", 182], ["1000.00", 447], ["2000.00", 715]].map(([v, x]) => (
        <T key={v} x={x as number} y={1669} s={19} c="text-[#555555]">{v}</T>
      ))}
      <svg className="absolute left-[174px] top-[1660px]" width="800" height="264" fill="none">
        <g transform="translate(-174 -1660)">
          <path d="M174 1680V1922" stroke="#5050e0" strokeWidth="3" />
          <path d={d} stroke="#6a9ee6" strokeWidth="2" />
          <path d="M336 1660V1924" stroke="#777777" strokeWidth="3" />
          <path d="M442 1660V1924M710 1660V1924" stroke="#555555" strokeWidth="1.5" />
        </g>
      </svg>
      <div className="absolute left-[140px] top-[1926px] flex gap-[2px]">
        {groups.map(([w, cell, vals], g) => (
          <div key={g} className="flex h-[25px] bg-[#333333]" style={{ width: w }}>
            {vals.map(([v], i) => <Num key={i} w={cell} h={25} v={v} s={13.5} bg="bg-transparent" />)}
          </div>
        ))}
      </div>
      <div className="absolute left-[146px] top-[1961px] flex text-[15px] leading-none text-[#222222]">
        {labels.map(([v, w]) => <span key={v} style={{ width: w }}>{v}</span>)}
      </div>

      <Box x={984} y={1650} w={372} h={16} className="bg-[#7a6a88]" />
      <div className="absolute left-[984px] top-[1668px] flex w-[376px] flex-col gap-[3px]">
        {rows.map(([h, bg, fill, v, label, lc], i) => (
          <Box key={i} h={h} className={bg}>
            {fill > 0 && <div className="absolute bottom-0 left-[8px] top-0 bg-[#d0e2e6]" style={{ width: fill }} />}
            <div className="absolute left-[6px] top-[2px] flex items-center gap-[4px] text-[7px] text-[#333333]"><Arrow h={12} fill="#cccccc" />{v}</div>
            {label && <span className={`absolute right-[10px] top-1/2 -translate-y-1/2 text-[14px] leading-none ${lc}`}>{label}</span>}
          </Box>
        ))}
      </div>
      <Box x={1360} y={1650} w={30} h={250} className="flex flex-col bg-[#5a5a5a]">
        <div className="h-[9px] bg-[#333333]" />
        <div className="h-[63px]" />
        <div className="flex-1 bg-[#d0e2e6]" />
        <div className="h-[8px] bg-[#333333]" />
      </Box>
      <Box x={1396} y={1650} w={32} h={250} className="flex flex-col bg-[#5a5a5a]">
        <div className="h-[130px]" />
        <div className="flex-1 bg-[#d0e2e6]" />
        <div className="h-[8px] bg-[#333333]" />
      </Box>
      <Msg x={1396} y={1646} w={42} h={30} v="0" s={17} />
      <Tog x={1444} y={1802} w={28} h={28} stroke="#666666" />
      <Ring x={984} y={1906} w={24} h={24} />
      <Tog x={1020} y={1906} w={24} h={24} stroke="#666666" />
      <div className="absolute left-[1046px] top-[1906px] flex gap-[2px]">
        <Msg w={38} h={26} v="0" s={14} />
        <Msg w={38} h={26} v="1" s={14} />
        <Msg w={44} h={26} v="1000" s={14} />
      </div>
      <Num x={1176} y={1902} w={76} h={33} v="9" s={19} />
      <T x={1260} y={1923} s={19}>BufIndex</T>
      <Num x={1436} y={1903} w={82} h={29} v="867.928" s={16} bg="bg-[#dddddd]" c="text-[#222222]" fill="#aaaaaa" />
      <div className="absolute left-[976px] top-[1936px] flex">
        <Msg w={32} h={24} v="10" s={14} />
        <Msg w={44} h={24} v="100" s={14} />
      </div>
      <Num x={1088} y={1930} w={74} h={30} v="43.54" s={20} />
      <Tog x={1168} y={1934} w={36} h={30} stroke="#666666" />
      <Ring x={1206} y={1934} w={36} h={30} />
      <Msg x={1044} y={1967} w={38} h={25} v="-1" s={14} />
      <T x={1106} y={1984} s={18}>granular 1</T>
      <Sub x={1260} y={1936} w={186} h={35} v="p filter parameters" s={21} />
      <Num x={1450} y={1936} w={76} h={34} v="13" s={19} />
      <Tog x={1336} y={1974} w={36} h={36} stroke="#666666" />
      <T x={1380} y={1997} s={19}>voice mosaic</T>
    </Win>
  );
};

const MenuBar = () => {
  const tray: [number, React.ReactNode][] = [
    [74, <svg width="16" height="16" fill="none" stroke="#dddddd" strokeWidth="1.6"><rect x="1" y="2" width="14" height="12" /><path d="M1 14L15 2M8 14L15 8" /></svg>],
    [50, <svg width="40" height="30" fill="none" stroke="#ffffff" strokeWidth="3.5"><circle cx="11" cy="18" r="8" /><circle cx="29" cy="18" r="8" /><path d="M8 12A11 11 0 0 1 30 10" /></svg>],
    [74, <div className="flex h-[40px] w-[32px] items-center justify-center rounded-full bg-[#55606c]"><svg width="20" height="32" fill="none" stroke="#7ce0b8" strokeWidth="3.5"><path d="M15 3H8Q4 3 4 8T10 15T15 23T10 29H4" /></svg></div>],
    [46, <svg width="34" height="34" fill="none" stroke="#ffffff" strokeWidth="3"><circle cx="17" cy="17" r="15" /><path d="M17 6L25 23H9Z" fill="#ffffff" /></svg>],
    [90, <History size={34} color="#ffffff" strokeWidth={1.8} />],
    [42, <div className="flex h-[32px] w-[32px] items-center justify-center rounded-full border-2 border-[#76859a] pb-[3px] text-[24px] leading-none text-[#76859a]">d</div>],
    [64, <Wifi size={36} color="#ffffff" strokeWidth={2.2} />],
    [72, <span className="text-[28px] text-white">63%</span>],
    [42, <BatteryCharging size={38} color="#ffffff" strokeWidth={1.8} />],
    [94, <Bluetooth size={32} color="#ffffff" strokeWidth={1.8} />],
    [182, <span className="text-[29px] whitespace-nowrap text-white">Thu 13:57:54</span>],
    [100, <Search size={30} color="#ffffff" strokeWidth={2} />],
    [38, <div className="h-[32px] w-[32px] rounded-full bg-[conic-gradient(#d050d0,#4080ff,#40d0e0,#ffffff,#d050d0)]" />],
    [76, <svg width="38" height="24" fill="#ffffff"><rect x="0" y="1" width="5" height="5" /><rect x="9" y="1" width="29" height="4" /><rect x="0" y="10" width="5" height="5" /><rect x="9" y="10" width="29" height="4" /><rect x="0" y="19" width="5" height="5" /><rect x="9" y="19" width="29" height="4" /></svg>],
  ];
  return (
    <div className="absolute left-0 top-0 flex h-[45px] w-[3360px] items-center border-b border-[#14202e] bg-gradient-to-r from-[#36465b] to-[#233b57] pl-[41px] pr-[27px] text-[29px] text-white">
      <FaApple size={32} className="mr-[35px]" />
      <div className="flex gap-[36.6px]">
        <span className="font-bold">Max</span>
        {["File", "Edit", "View", "Object", "Arrange", "Options", "Debug", "Window", "Extras", "Help"].map((m) => (
          <span key={m}>{m}</span>
        ))}
      </div>
      <div className="ml-auto flex items-center">
        {tray.map(([w, node], i) => (
          <div key={i} className="flex items-center justify-center" style={{ width: w }}>{node}</div>
        ))}
      </div>
    </div>
  );
};

export default function App() {
  return (
    <div className="relative h-[2100px] w-[3360px] overflow-hidden bg-[#1a1a1a] font-['Liberation_Sans',Arial,sans-serif]">
      <Desktop />
      <LeftWindows />
      <Win x={34} y={1509} w={3284} h={200} title="Max Console" plain bar="bg-[#3e3a35]" body="bg-[#555555]" dots={["#6b6860", "#6b6860", "#6b6860"]} />
      <Session />
      <BehindMixer />
      <Mixer />
      <PlayWindow />
      <Mubu />
      <Fire />
      <Dispersion />
      <MenuBar />
    </div>
  );
}
